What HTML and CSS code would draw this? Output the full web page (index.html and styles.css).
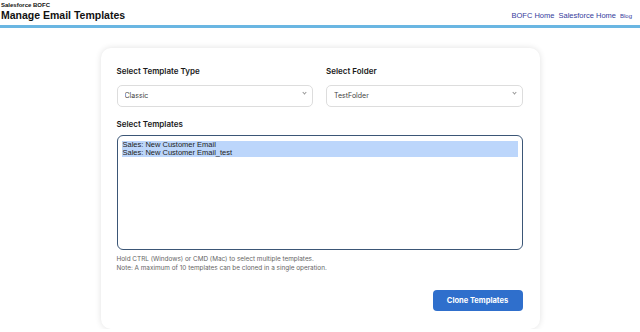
FILE: index.html
```html
<!DOCTYPE html>
<html lang="en">
<head>
<meta charset="UTF-8">
<meta name="viewport" content="width=device-width, initial-scale=1.0">
<title>Manage Email Templates</title>
<link rel="stylesheet" href="styles.css">
</head>
<body>

<header class="top-bar">
    <div class="brand">
        <div class="brand-small">Salesforce BOFC</div>
        <h1>Manage Email Templates</h1>
    </div>
    <nav class="nav-links">
        <a href="#">BOFC Home</a>
        <a href="#">Salesforce Home</a>
        <a href="#" class="small-link">Blog</a>
    </nav>
</header>

<div class="card">
    <div class="row">
        <div class="form-group">
            <label for="templateType">Select Template Type</label>
            <div class="select-wrap">
                <select id="templateType">
                    <option>Classic</option>
                </select>
            </div>
        </div>
        <div class="form-group">
            <label for="folder">Select Folder</label>
            <div class="select-wrap">
                <select id="folder">
                    <option>TestFolder</option>
                </select>
            </div>
        </div>
    </div>
    <div class="form-group">
        <label for="templates">Select Templates</label>
        <div class="list-box" id="templates">
            <div class="list-option selected">Sales: New Customer Email</div>
            <div class="list-option selected">Sales: New Customer Email_test</div>
        </div>
        <p class="hint">Hold CTRL (Windows) or CMD (Mac) to select multiple templates.<br>
        Note: A maximum of 10 templates can be cloned in a single operation.</p>
    </div>
    <div class="actions">
        <button type="button" class="btn">Clone Templates</button>
    </div>
</div>

</body>
</html>
```

FILE: styles.css
```css
body {
    font-family: Inter, "Liberation Sans", Arial, sans-serif;
    margin: 0;
    padding: 0;
    background-color: #fff;
    color: #111;
}
.top-bar {
    display: flex;
    justify-content: space-between;
    align-items: flex-end;
    padding: 3px 8px 3px 1px;
    border-bottom: 3px solid #6ab6e2;
    height: 19px;
    font-family: "Liberation Sans", Arial, sans-serif;
}
.brand-small {
    font-size: 6px;
    font-weight: bold;
    line-height: 8px;
}
.brand h1 {
    margin: 0;
    font-size: 10.5px;
    font-weight: 700;
    line-height: 13px;
}
.nav-links {
    display: flex;
    align-items: baseline;
    gap: 4px;
    padding-bottom: 2px;
}
.nav-links a {
    color: #353b9c;
    text-decoration: none;
    font-size: 7.5px;
}
.nav-links a.small-link {
    font-size: 6px;
}
.card {
    width: 406px;
    margin: 20px auto 0;
    padding: 18px 17px 18px 16px;
    background-color: #fff;
    border-radius: 10px;
    box-shadow: 0 0 6px rgba(0, 0, 0, 0.12);
}
.row {
    display: grid;
    grid-template-columns: 1fr 1fr;
    gap: 13px;
}
.form-group {
    margin-bottom: 12px;
}
label {
    display: block;
    font-size: 8px;
    font-weight: 600;
    margin-bottom: 6px;
    color: #1a1a1a;
}
.select-wrap {
    position: relative;
}
select {
    width: 100%;
    height: 22px;
    padding: 0 7px;
    font-family: inherit;
    font-size: 7px;
    color: #444;
    border: 1px solid #ddd;
    border-radius: 5px;
    background-color: #fff;
    appearance: none;
}
.select-wrap::after {
    content: "";
    position: absolute;
    right: 7px;
    top: 9px;
    width: 2px;
    height: 2px;
    border-right: 1px solid #999;
    border-bottom: 1px solid #999;
    transform: rotate(45deg);
}
.list-box {
    height: 103px;
    padding: 5px 4px;
    border: 1px solid #3b5676;
    border-radius: 6px;
    font-family: "Liberation Sans", Arial, sans-serif;
    font-size: 7.5px;
    color: #222;
}
.list-option {
    line-height: 8px;
    padding: 0 1px;
}
.list-option.selected {
    background-color: #bcd6fb;
}
.hint {
    margin: 5px 0 0;
    font-size: 6.4px;
    line-height: 9px;
    color: #666;
}
.actions {
    display: flex;
    justify-content: flex-end;
    margin-top: 17px;
}
.btn {
    background-color: #2f6fcc;
    color: #fff;
    border: none;
    width: 90px;
    height: 21px;
    font-family: inherit;
    font-size: 7.5px;
    font-weight: 700;
    border-radius: 4px;
    cursor: pointer;
}
```
